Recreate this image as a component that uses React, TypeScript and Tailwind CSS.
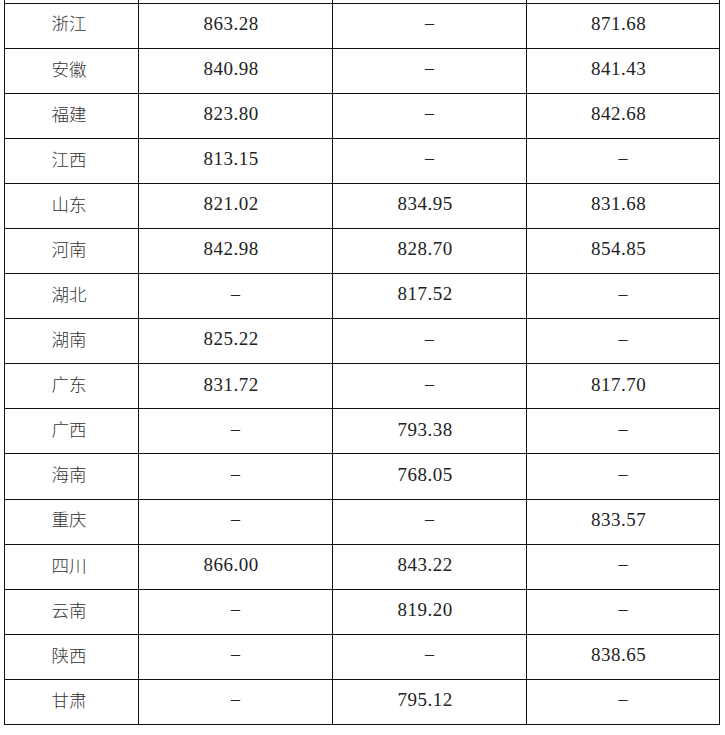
type Row = { name: string; a: string; b: string; c: string };

const rows: Row[] = [
  { name: "浙江", a: "863.28", b: "-", c: "871.68" },
  { name: "安徽", a: "840.98", b: "-", c: "841.43" },
  { name: "福建", a: "823.80", b: "-", c: "842.68" },
  { name: "江西", a: "813.15", b: "-", c: "-" },
  { name: "山东", a: "821.02", b: "834.95", c: "831.68" },
  { name: "河南", a: "842.98", b: "828.70", c: "854.85" },
  { name: "湖北", a: "-", b: "817.52", c: "-" },
  { name: "湖南", a: "825.22", b: "-", c: "-" },
  { name: "广东", a: "831.72", b: "-", c: "817.70" },
  { name: "广西", a: "-", b: "793.38", c: "-" },
  { name: "海南", a: "-", b: "768.05", c: "-" },
  { name: "重庆", a: "-", b: "-", c: "833.57" },
  { name: "四川", a: "866.00", b: "843.22", c: "-" },
  { name: "云南", a: "-", b: "819.20", c: "-" },
  { name: "陕西", a: "-", b: "-", c: "838.65" },
  { name: "甘肃", a: "-", b: "795.12", c: "-" },
];

function Value({ v }: { v: string }) {
  if (v === "-") {
    return (
      <td className="border border-[#111] p-0 pb-[4px] text-center align-middle font-['Liberation_Serif',serif] text-[18px] text-[#222]">
        –
      </td>
    );
  }
  return (
    <td className="border border-[#111] p-0 pb-[3px] pr-[9px] text-center align-middle font-['Liberation_Serif',serif] text-[19px] tracking-[0.5px] text-[#222]">
      {v}
    </td>
  );
}

export default function App() {
  return (
    <div className="h-[735px] w-[725px] overflow-hidden bg-white pl-[4px]">
      <table className="w-[715px] table-fixed border-collapse">
        <colgroup>
          <col className="w-[134px]" />
          <col className="w-[194px]" />
          <col className="w-[194px]" />
          <col className="w-[193px]" />
        </colgroup>
        <tbody>
          <tr className="h-[3px]">
            <td className="border-x border-[#111] p-0" />
            <td className="border-x border-[#111] p-0" />
            <td className="border-x border-[#111] p-0" />
            <td className="border-x border-[#111] p-0" />
          </tr>
          {rows.map((r) => (
            <tr key={r.name} className="h-[45.1px]">
              <td className="border border-[#111] p-0 pb-[4px] pr-[5px] text-center align-middle font-['Noto_Sans_CJK_SC',sans-serif] text-[17.5px] font-light text-[#333]">
                {r.name}
              </td>
              <Value v={r.a} />
              <Value v={r.b} />
              <Value v={r.c} />
            </tr>
          ))}
        </tbody>
      </table>
    </div>
  );
}
